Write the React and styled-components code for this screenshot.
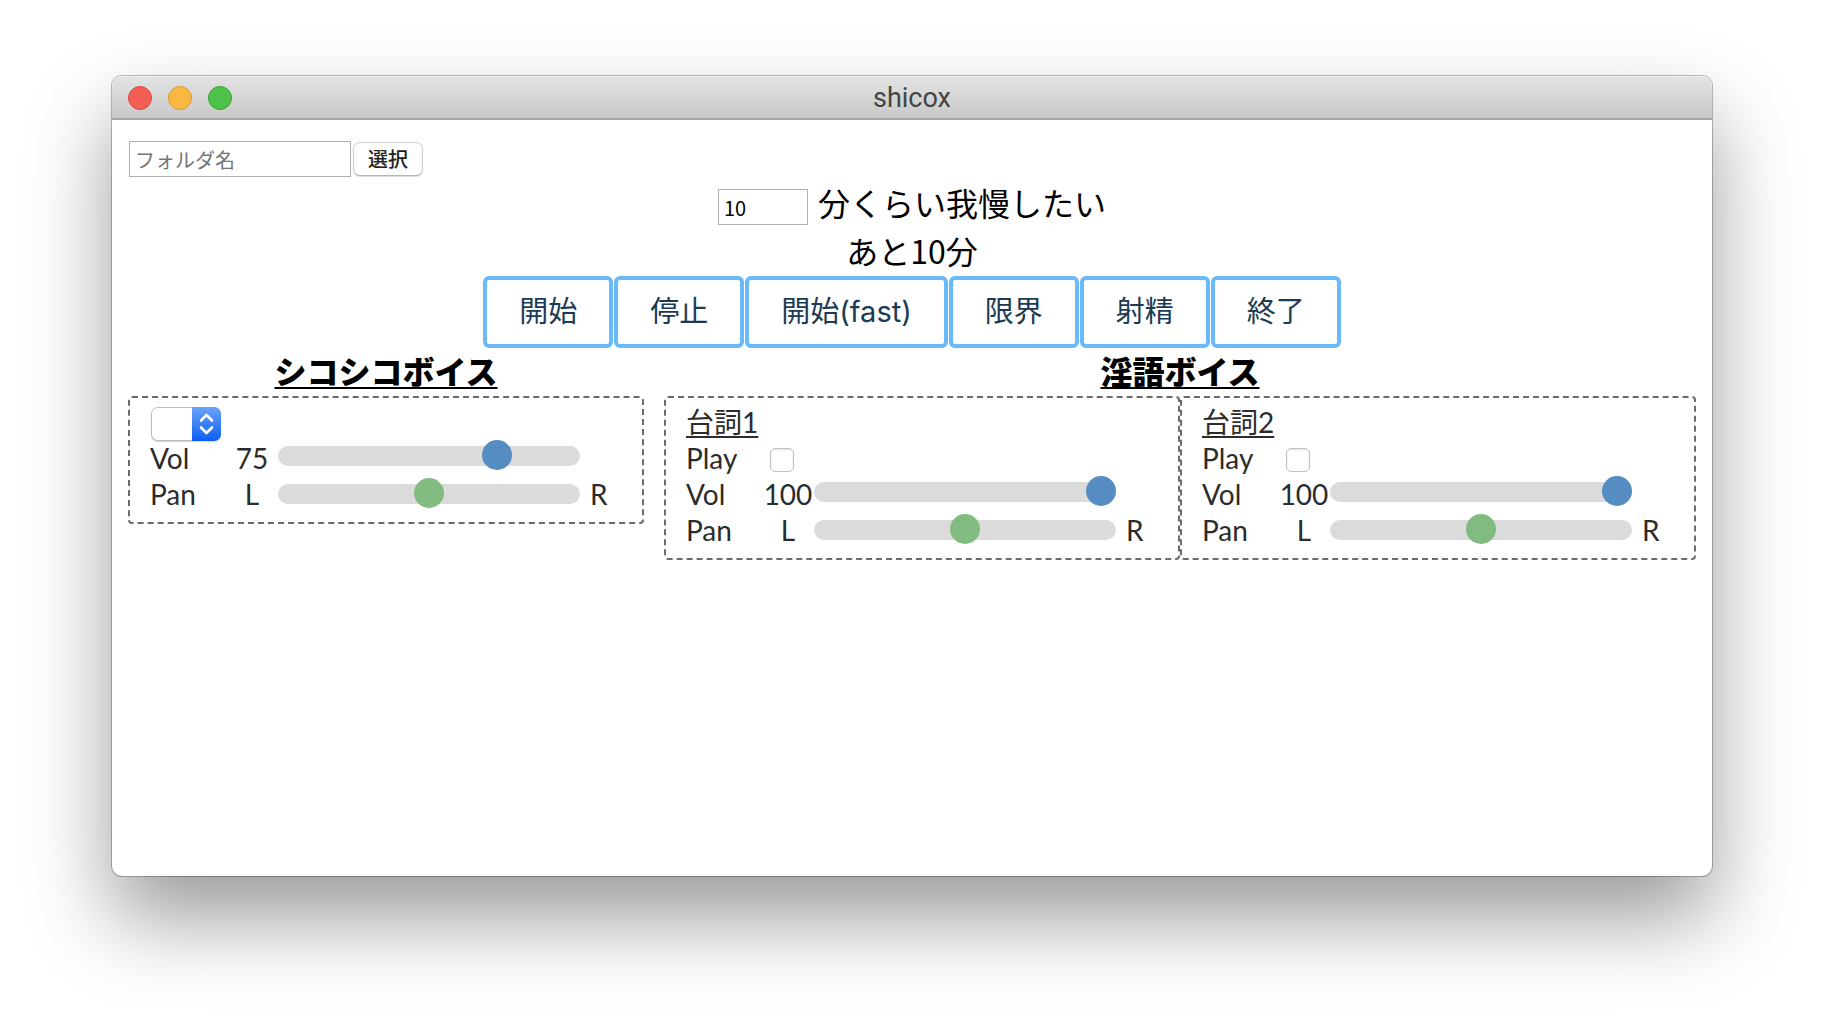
import React, { useState } from "react";
import styled, { createGlobalStyle } from "styled-components";

const GlobalStyle = createGlobalStyle`
  *, *::before, *::after { box-sizing: border-box; }
  body {
    margin: 0;
    background: #fff;
    color: #000;
    font-family: Lato, "Noto Sans CJK JP", sans-serif;
    font-size: 28px;
  }
  button, input, select { margin: 0; font-family: "Noto Sans CJK JP", sans-serif; }
`;

const Desktop = styled.div`
  display: flex;
  min-height: 100vh;
  padding: 76px 112px 148px;
`;

const AppWindow = styled.div`
  display: flex;
  flex-direction: column;
  flex: 1;
  min-width: 0;
  border-radius: 10px;
  background: #fff;
  box-shadow: 0 0 0 1px rgba(0, 0, 0, 0.26), 0 42px 84px rgba(0, 0, 0, 0.4);
`;

const TitleBar = styled.header`
  display: grid;
  grid-template-columns: 1fr auto 1fr;
  align-items: center;
  height: 44px;
  padding: 2px 16px 0;
  border-bottom: 2px solid #a6a6a6;
  border-radius: 10px 10px 0 0;
  background: linear-gradient(#e3e3e3, #c9c9c9);
  box-shadow: inset 0 1px 0 #f0f0f0;
`;

const Lights = styled.div`
  display: flex;
  gap: 16px;
`;

const Light = styled.button`
  width: 24px;
  height: 24px;
  padding: 0;
  border: 1px solid ${(p) => p.$edge};
  border-radius: 50%;
  background: ${(p) => p.$fill};
`;

const Title = styled.h1`
  margin: 0;
  color: #444;
  font: 400 27px/40px Roboto, sans-serif;
`;

const Content = styled.main`
  padding: 16px;
`;

const FolderRow = styled.form`
  display: flex;
  align-items: center;
  gap: 2px;
  height: 44px;
  padding: 2px 1px 0;
`;

const TextInput = styled.input`
  width: ${(p) => p.$width};
  height: 36px;
  padding: 0 5px;
  border: 1px solid #b0b0b0;
  border-radius: 0;
  background: #fff;
  color: #000;
  font-size: 20px;
  outline: none;
  appearance: textfield;
  &::placeholder { color: #757575; opacity: 1; }
  &::-webkit-inner-spin-button { appearance: none; }
`;

const ChooseButton = styled.button`
  height: 34px;
  padding: 0 14px;
  border: 1px solid #cfcfcf;
  border-bottom-color: #b4b4b4;
  border-radius: 7px;
  background: #fff;
  box-shadow: 0 1px 1px rgba(0, 0, 0, 0.14);
  color: #222;
  font-size: 20px;
  font-weight: 500;
  line-height: 30px;
`;

const TimeRow = styled.div`
  display: flex;
  justify-content: center;
  gap: 10px;
  height: 48px;
  font: 400 32px/44px "Noto Sans CJK JP", sans-serif;
`;

const MinutesInput = styled(TextInput)`
  margin-top: 9px;
`;

const Actions = styled.div`
  display: flex;
  justify-content: center;
  gap: 1px;
`;

const ActionButton = styled.button`
  height: 72px;
  padding: 0 32px;
  border: 4px solid #6abaf9;
  border-radius: 6px;
  background: #fff;
  color: #1b3b54;
  font-family: Inter, "Noto Sans CJK JP", sans-serif;
  font-size: 29px;
  line-height: 60px;
`;

const Voices = styled.div`
  display: grid;
  grid-template-columns: 1fr 2fr;
  column-gap: 20px;
`;

const VoiceGroup = styled.section`
  min-width: 0;
`;

const GroupTitle = styled.h2`
  margin: 0;
  height: 48px;
  font: 900 32px/44px "Noto Sans CJK JP", sans-serif;
  text-align: center;
  text-decoration: underline 2px;
  text-underline-offset: 3px;
  text-decoration-skip-ink: none;
`;

const Panels = styled.div`
  display: flex;
`;

const Panel = styled.div`
  flex: 1;
  min-width: 0;
  padding: 6px 20px 10px;
  border: 2px dashed #6b6b6b;
  border-radius: 4px;
  color: #2c2c2c;
  line-height: 36px;
`;

const PanelTitle = styled.h3`
  margin: 0;
  height: 36px;
  font-size: 28px;
  font-weight: 400;
  text-decoration: underline 2px;
  text-underline-offset: 3px;
  text-decoration-skip-ink: none;
`;

const ControlRow = styled.div`
  display: grid;
  grid-template-columns: 76px 52px 302px auto;
  align-items: center;
  height: 36px;
`;

const Value = styled.output`
  display: flex;
  justify-content: center;
`;

const RightMark = styled.span`
  padding-left: 10px;
`;

const Range = styled.input`
  appearance: none;
  width: 100%;
  height: 20px;
  margin-bottom: ${(p) => p.$lift};
  border-radius: 10px;
  background: #dbdbdb;
  outline: none;
  &::-webkit-slider-thumb {
    appearance: none;
    width: 30px;
    height: 30px;
    margin-top: -2px;
    border-radius: 50%;
    background: ${(p) => p.$color};
  }
`;

const Check = styled.input`
  appearance: none;
  width: 24px;
  height: 24px;
  margin: 4px 0 0 8px;
  border: 1px solid #c2c2c2;
  border-radius: 5px;
  background: #fff;
  box-shadow: inset 0 1px 2px rgba(0, 0, 0, 0.12);
  &:checked { background: #3b82f6; }
`;

const SelectRow = styled.div`
  display: flex;
  height: 36px;
  padding-top: 3px;
`;

const SelectBox = styled.div`
  position: relative;
  width: 71px;
  height: 34px;
  padding-left: 1px;
`;

const Select = styled.select`
  appearance: none;
  display: block;
  width: 100%;
  height: 34px;
  padding: 0 32px 0 8px;
  border: 1px solid #bdbdbd;
  border-radius: 7px;
  background: #fff;
  box-shadow: 0 1px 1px rgba(0, 0, 0, 0.18);
  font-size: 20px;
`;

const Stepper = styled.span`
  position: absolute;
  top: 0;
  right: 0;
  display: flex;
  width: 29px;
  height: 34px;
  border-radius: 0 7px 7px 0;
  background: linear-gradient(#6aa2f7, #0d60f5);
  pointer-events: none;
`;

function VolumeRow({ id, initial }) {
  const [volume, setVolume] = useState(initial);
  return (
    <ControlRow>
      <label htmlFor={id}>Vol</label>
      <Value htmlFor={id}>{volume}</Value>
      <Range id={id} type="range" min="0" max="100" value={volume} $color="#558cc2" $lift="4px"
        onChange={(e) => setVolume(Number(e.target.value))} />
    </ControlRow>
  );
}

function PanRow({ id }) {
  return (
    <ControlRow>
      <label htmlFor={id}>Pan</label>
      <Value as="span">L</Value>
      <Range id={id} type="range" min="-100" max="100" defaultValue="0" $color="#82bb7f" $lift="0" />
      <RightMark>R</RightMark>
    </ControlRow>
  );
}

function LinePanel({ number }) {
  return (
    <Panel>
      <PanelTitle>台詞{number}</PanelTitle>
      <ControlRow>
        <label htmlFor={`play-${number}`}>Play</label>
        <Check id={`play-${number}`} type="checkbox" />
      </ControlRow>
      <VolumeRow id={`volume-${number}`} initial={100} />
      <PanRow id={`pan-${number}`} />
    </Panel>
  );
}

const actions = ["開始", "停止", "開始(fast)", "限界", "射精", "終了"];

export default function App() {
  const [minutes, setMinutes] = useState("10");
  return (
    <>
      <GlobalStyle />
      <Desktop>
        <AppWindow>
          <TitleBar>
            <Lights>
              <Light aria-label="閉じる" $fill="#f35f55" $edge="#d9493f" />
              <Light aria-label="しまう" $fill="#fab843" $edge="#dc9a2e" />
              <Light aria-label="拡大" $fill="#4dc148" $edge="#37a433" />
            </Lights>
            <Title>shicox</Title>
          </TitleBar>
          <Content>
            <FolderRow onSubmit={(e) => e.preventDefault()}>
              <TextInput type="text" placeholder="フォルダ名" aria-label="フォルダ名" $width="222px" />
              <ChooseButton type="button">選択</ChooseButton>
            </FolderRow>
            <TimeRow>
              <MinutesInput id="minutes" type="number" value={minutes} $width="90px"
                onChange={(e) => setMinutes(e.target.value)} />
              <label htmlFor="minutes">分くらい我慢したい</label>
            </TimeRow>
            <TimeRow>あと{minutes}分</TimeRow>
            <Actions>
              {actions.map((name) => (
                <ActionButton key={name} type="button">{name}</ActionButton>
              ))}
            </Actions>
            <Voices>
              <VoiceGroup>
                <GroupTitle>シコシコボイス</GroupTitle>
                <Panels>
                  <Panel>
                    <SelectRow>
                      <SelectBox>
                        <Select aria-label="シコシコボイス"><option value="" /></Select>
                        <Stepper>
                          <svg width="29" height="34" viewBox="0 0 29 34" fill="none" stroke="#fff"
                            strokeWidth="2.6" strokeLinecap="round" strokeLinejoin="round">
                            <path d="M9 13.5 14.5 8l5.5 5.5M9 20.5 14.5 26l5.5-5.5" />
                          </svg>
                        </Stepper>
                      </SelectBox>
                    </SelectRow>
                    <VolumeRow id="volume-main" initial={75} />
                    <PanRow id="pan-main" />
                  </Panel>
                </Panels>
              </VoiceGroup>
              <VoiceGroup>
                <GroupTitle>淫語ボイス</GroupTitle>
                <Panels>
                  <LinePanel number={1} />
                  <LinePanel number={2} />
                </Panels>
              </VoiceGroup>
            </Voices>
          </Content>
        </AppWindow>
      </Desktop>
    </>
  );
}
